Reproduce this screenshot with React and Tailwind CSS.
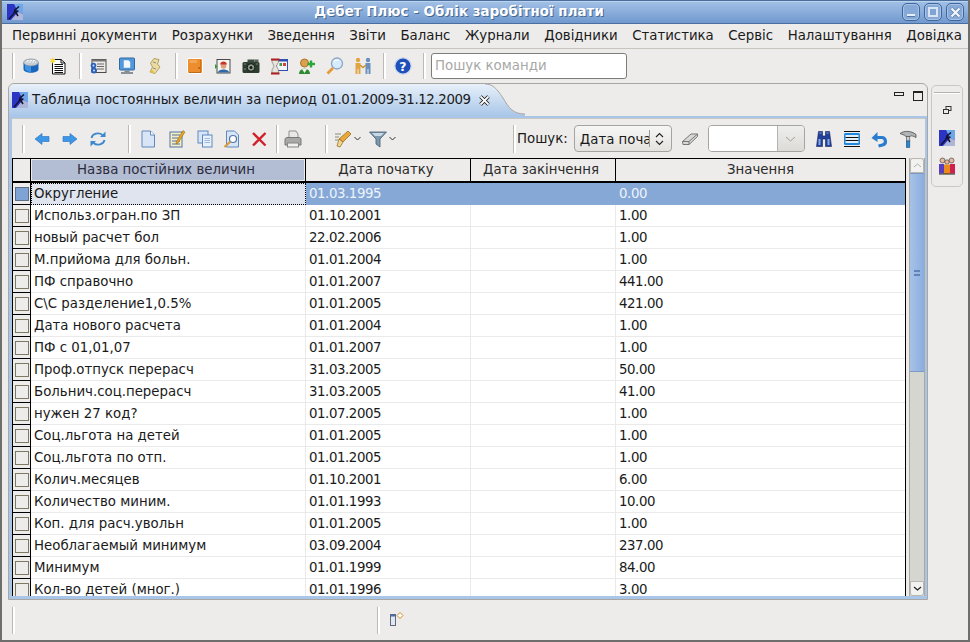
import React from 'react';

const MENU = ['Первинні документи', 'Розрахунки', 'Зведення', 'Звіти', 'Баланс', 'Журнали', 'Довідники', 'Статистика', 'Сервіс', 'Налаштування', 'Довідка'];

const ROWS = [
  ['Округление', '01.03.1995', '0.00'],
  ['Использ.огран.по ЗП', '01.10.2001', '1.00'],
  ['новый расчет бол', '22.02.2006', '1.00'],
  ['М.прийома для больн.', '01.01.2004', '1.00'],
  ['ПФ справочно', '01.01.2007', '441.00'],
  ['С\\С разделение1,0.5%', '01.01.2005', '421.00'],
  ['Дата нового расчета', '01.01.2004', '1.00'],
  ['ПФ с 01,01,07', '01.01.2007', '1.00'],
  ['Проф.отпуск перерасч', '31.03.2005', '50.00'],
  ['Больнич.соц.перерасч', '31.03.2005', '41.00'],
  ['нужен 27 код?', '01.07.2005', '1.00'],
  ['Соц.льгота на детей', '01.01.2005', '1.00'],
  ['Соц.льгота по отп.', '01.01.2005', '1.00'],
  ['Колич.месяцев', '01.10.2001', '6.00'],
  ['Количество миним.', '01.01.1993', '10.00'],
  ['Коп. для расч.увольн', '01.01.2005', '1.00'],
  ['Необлагаемый минимум', '03.09.2004', '237.00'],
  ['Минимум', '01.01.1999', '84.00'],
  ['Кол-во детей (мног.)', '01.01.1996', '3.00'],
];

const Svg = ({ children, s = 18 }) => (
  <svg width={s} height={s} viewBox="0 0 18 18" className="shrink-0">{children}</svg>
);

const AppLogo = () => (
  <svg width={16} height={16} viewBox="1 1 16 16" className="shrink-0">
    <rect x="1" y="1" width="16" height="16" fill="#2c34c4" />
    <path d="M8 1H17V11L12 9Z" fill="#6fa6e8" />
    <path d="M5 17L12 9L17 11V17Z" fill="#aeb6da" />
    <path d="M3 16L8 10.500L9 7L13 3.500M8 9L12.500 8M9 8L12 13" stroke="#12122e" strokeWidth="1.500" fill="none" />
  </svg>
);

const Sep = ({ h = 'h-[26px]' }) => (
  <div className={`w-[3px] ${h} shrink-0 border-l border-[#bdbab3] border-r-2 border-r-white`} />
);

const Db = () => (
  <Svg>
    <path d="M1.500 6V12C1.500 17 16.500 17 16.500 12V6Z" fill="#1766c0" />
    <path d="M3 8V12C4 14.500 8 15 9 15V8Z" fill="#3f92e0" />
    <ellipse cx="9" cy="5.500" rx="7.500" ry="3.500" fill="#c6ccd4" stroke="#6f7f90" strokeWidth=".6" />
    <path d="M4 5H14M5 3.500H13" stroke="#f2f4f6" strokeDasharray="2 1" />
  </Svg>
);
const NewNote = () => (
  <Svg>
    <path d="M3.500 2.500H12L16 6V17H3.500Z" fill="#fff" stroke="#111" />
    <path d="M12 2.500V6H16" fill="none" stroke="#111" />
    <path d="M5.500 7.500H14M5.500 9.500H14M5.500 11.500H14M5.500 13.500H14M5.500 15.500H14" stroke="#111" />
    <path d="M3.500 0L4.300 2.200 6.500 1.500 5.200 3.500 7 5 4.700 5 4 7 3 5 .5 5.500 2 3.500 .5 1.500 2.700 2.200Z" fill="#f4dc3a" />
  </Svg>
);
const ListGear = () => (
  <Svg>
    <rect x="3" y="2.500" width="14" height="13" fill="#ecebe8" stroke="#4a4a4a" />
    <rect x="3" y="2.500" width="14" height="2" fill="#777" />
    <path d="M8 7H15M8 9.500H15M8 12H15" stroke="#666" />
    <circle cx="4.500" cy="8.500" r="2.800" fill="#2a62b8" />
    <circle cx="5" cy="13.500" r="3" fill="#2a62b8" />
    <circle cx="5" cy="13.500" r="1" fill="#cfe0f6" />
    <circle cx="4.500" cy="8.500" r="1" fill="#cfe0f6" />
  </Svg>
);
const Monitor = () => (
  <Svg>
    <rect x="1.500" y="1" width="15" height="12" rx="1" fill="#4d9ae0" stroke="#35689c" />
    <path d="M5.500 3H10.500L12.500 5V11H5.500Z" fill="#f2f7fc" stroke="#5c8ab8" strokeWidth=".5" />
    <path d="M6.500 13.500H11.500V15H6.500Z" fill="#7d8a96" />
    <path d="M3 15.500H15V16.500H3Z" fill="#2c3640" />
  </Svg>
);
const Scroll = () => (
  <Svg>
    <path d="M9 1.500L14 2.500L12.500 7L15 10L10 16.500L5 15L7.500 10L5.500 6Z" fill="#ecdca0" stroke="#a58f48" strokeWidth=".8" />
    <path d="M8 5L11 6M8 11L11 12" stroke="#8e8e8e" />
    <path d="M5 14.500L7.500 16.500L9 15L7 13Z" fill="#e2c030" />
  </Svg>
);
const OrangeBook = () => (
  <svg width={16} height={16} viewBox="0 0 16 16" className="shrink-0">
    <rect x=".5" y=".5" width="15" height="15" rx="1.500" fill="#ec8d2e" stroke="#fff" />
    <path d="M2 14.500H14" stroke="#b96a1a" />
    <path d="M13.500 2V14" stroke="#c9741f" />
    <rect x="11" y="9" width="2" height="2" fill="#b96a1a" />
    <path d="M2.500 2H10V5H2.500Z" fill="#f3a655" />
  </svg>
);
const Portrait = () => (
  <Svg>
    <rect x="3" y="2.500" width="13" height="13.500" fill="#f4f4f0" stroke="#4a4a4a" />
    <path d="M4 15.500C4 11.500 15 11.500 15 15.500Z" fill="#2f68a8" />
    <circle cx="9.500" cy="9" r="2.800" fill="#e0a080" />
    <path d="M6 7.500C6.500 3.500 12.500 3.500 13 7.500Z" fill="#c8342a" />
    <path d="M1 7L3.500 9.500L1 12Z" fill="#2f9a3c" />
  </Svg>
);
const Camera = () => (
  <Svg>
    <rect x=".5" y="5" width="17" height="11" rx="1.500" fill="#2e3c30" />
    <rect x="5.500" y="2.500" width="7" height="3" fill="#3d4c3f" />
    <rect x="12.500" y="2.500" width="4" height="2.500" fill="#566357" />
    <circle cx="9" cy="10.500" r="3.800" fill="#8d9a8e" stroke="#151c16" />
    <circle cx="9" cy="10.500" r="1.500" fill="#151c16" />
    <path d="M2 7H4M14 7H16M2 12H4" stroke="#7e8c80" />
  </Svg>
);
const Hourglass = () => (
  <Svg>
    <rect x="6.500" y="2.500" width="11" height="11" fill="#f4f4f8" stroke="#2f4fb0" />
    <rect x="6.500" y="2.500" width="11" height="2" fill="#2f4fb0" />
    <rect x="13" y="6" width="3" height="3" fill="#d84030" />
    <rect x="9.500" y="6" width="2.500" height="3" fill="#3a9a4a" />
    <path d="M2 3H8.500V5L6.500 9L8.500 13V16H2V13L4 9L2 5Z" fill="#e8e4dc" stroke="#555" strokeWidth=".5" />
    <path d="M1 2.500H9.500M1 16.500H9.500" stroke="#b01f1f" strokeWidth="2" />
  </Svg>
);
const UserPlus = () => (
  <Svg>
    <circle cx="6.500" cy="6" r="4" fill="#dda050" stroke="#a8741e" />
    <path d="M1 17C1 10 12 10 12 17Z" fill="#2f8a34" />
    <path d="M4 12H9L6.500 16Z" fill="#f2f2e0" />
    <path d="M13 3.500V10.500M9.500 7H17" stroke="#28a838" strokeWidth="2.400" />
  </Svg>
);
const Magnifier = () => (
  <Svg>
    <circle cx="11" cy="6.500" r="5.500" fill="#d5ebff" stroke="#8aa6c4" strokeWidth="1.300" />
    <path d="M8 5C9 3.500 11 3 12.500 3.500" stroke="#fff" strokeWidth="1.200" fill="none" />
    <path d="M7 11L1.500 16.500" stroke="#e69a38" strokeWidth="2.800" />
  </Svg>
);
const Handshake = () => (
  <Svg>
    <circle cx="4" cy="3" r="2.200" fill="#e2a544" />
    <circle cx="14" cy="3" r="2.200" fill="#6a90c0" />
    <path d="M1.500 6H6.500V17H4.500V12H3.500V17H1.500Z" fill="#e2a544" />
    <path d="M11.500 6H16.500V17H14.500V12H13.500V17H11.500Z" fill="#6a90c0" />
    <path d="M6 8L9 10.500L12 8" stroke="#cf8f2c" strokeWidth="1.500" fill="none" />
  </Svg>
);
const Help = () => (
  <Svg>
    <circle cx="9" cy="9" r="8.200" fill="#1f4fb8" stroke="#cdd9ee" strokeWidth="1.200" />
    <text x="9" y="13.500" textAnchor="middle" fontSize="12.500" fontWeight="700" fill="#fff" fontFamily="'DejaVu Sans', sans-serif">?</text>
  </Svg>
);

const ArrowL = () => (
  <Svg>
    <path d="M2 9L9 3.500V6.500H16V11.500H9V14.500Z" fill="#3d97e8" stroke="#2a6fb8" strokeWidth=".6" />
  </Svg>
);
const ArrowR = () => (
  <Svg>
    <path d="M16 9L9 3.500V6.500H2V11.500H9V14.500Z" fill="#3d97e8" stroke="#2a6fb8" strokeWidth=".6" />
  </Svg>
);
const Refresh = () => (
  <Svg>
    <path d="M2.500 8A6.500 5.500 0 0 1 13.500 5M15.500 10A6.500 5.500 0 0 1 4.500 13" stroke="#3d88cc" strokeWidth="1.800" fill="none" />
    <path d="M11 7H16.500V1.500ZM7 11H1.500V16.500Z" fill="#3d88cc" />
  </Svg>
);
const Doc = () => (
  <Svg>
    <path d="M3 1H11.500L15.500 5V17H3Z" fill="#d7e5f7" stroke="#5f88bd" />
    <path d="M11.500 1V5H15.500" fill="#fff" stroke="#5f88bd" />
  </Svg>
);
const DocEdit = () => (
  <Svg>
    <rect x="2" y="2" width="12" height="15" fill="#f6edc0" stroke="#4f73a8" />
    <path d="M4 5H12M4 8H12M4 11H12M4 14H12" stroke="#4f73a8" />
    <path d="M15 0.500L17 2L10 13L8 14L8.300 11.700Z" fill="#e8a420" stroke="#8a6010" strokeWidth=".5" />
  </Svg>
);
const DocCopy = () => (
  <Svg>
    <rect x="2" y="1" width="10" height="12" fill="#d7e5f7" stroke="#5f88bd" />
    <rect x="6.500" y="5" width="9.500" height="12" fill="#e9f1fb" stroke="#5f88bd" />
    <path d="M8.500 8.500H14M8.500 10.500H14M8.500 12.500H14" stroke="#9cb8da" />
  </Svg>
);
const DocFind = () => (
  <Svg>
    <path d="M3.500 1H11.500L15.500 5V17H3.500Z" fill="#d7e5f7" stroke="#5f88bd" />
    <circle cx="10" cy="9" r="3.500" fill="#fff" stroke="#4f73a8" strokeWidth="1.200" />
    <path d="M7.500 11.500L1.500 17" stroke="#d89a38" strokeWidth="2.200" />
  </Svg>
);
const Cross = () => (
  <Svg>
    <path d="M3 3L15.500 15.500M15.500 3L3 15.500" stroke="#d0202c" strokeWidth="2.400" />
  </Svg>
);
const Printer = () => (
  <Svg>
    <path d="M5 1H12L14 4V9H5Z" fill="#e8e8e6" stroke="#8f8f8d" />
    <path d="M1 10C1 8 2 7.500 3 7.500H15C16 7.500 17 8 17 10V15H1Z" fill="#a8a8a6" stroke="#777775" />
    <rect x="3.500" y="13" width="11" height="4" fill="#efefed" stroke="#858583" />
  </Svg>
);
const Marker = () => (
  <Svg>
    <path d="M1 4H7M1 7H5M1 10H4" stroke="#8a8a7a" />
    <path d="M14 1L17 4L9 12L5 9Z" fill="#e8a83a" stroke="#8c6418" strokeWidth=".7" />
    <path d="M5 9L9 12L6 17L3 16Z" fill="#f0d890" stroke="#8c6418" strokeWidth=".7" />
  </Svg>
);
const Funnel = () => (
  <Svg>
    <path d="M.5 2H17.500L11 9V17L7 14V9Z" fill="#7b98ae" stroke="#3f5c74" strokeWidth=".8" />
    <path d="M3 3H15L12 6H6Z" fill="#c8d8e4" />
  </Svg>
);
const Chevron = () => (
  <svg width={7} height={5} viewBox="0 0 7 5" className="shrink-0">
    <path d="M.5 1L3.500 4L6.500 1" stroke="#333" fill="none" />
  </svg>
);
const Eraser = () => (
  <Svg>
    <path d="M1.500 11.500L10 4H16.500V6.500L8 14.500H2Z" fill="#d8d8d4" stroke="#777" />
    <path d="M1.500 11.500H8V14.500M8 11.500L16.500 4" stroke="#777" fill="none" />
  </Svg>
);
const Binoculars = () => (
  <Svg>
    <path d="M3.500 1.500H7.500V6H10.500V1.500H14.500L16.500 16.500H10.500V9H7.500V16.500H1.500Z" fill="#23409a" stroke="#14245c" strokeWidth=".6" />
    <path d="M3.500 9H5.500V15H3.500ZM12.500 9H14.500V15H12.500Z" fill="#86a8e6" />
    <path d="M4.500 3H6.500M11.500 3H13.500" stroke="#86a8e6" />
  </Svg>
);
const Lines = () => (
  <Svg>
    <path d="M1 1.500H17M1 16.500H17" stroke="#111" />
    <rect x="1" y="3" width="16" height="12" rx="1.500" fill="#1f86de" />
    <rect x="2.500" y="5" width="13" height="8" fill="#e2eef9" />
    <path d="M2.500 7.500H15.500M2.500 10.500H15.500" stroke="#111" />
  </Svg>
);
const Undo = () => (
  <Svg>
    <path d="M3.500 7.500H10.500A3.800 3.800 0 0 1 11.500 15L7.500 16" stroke="#2a7cd0" strokeWidth="3.200" fill="none" />
    <path d="M.5 8L6.500 2V12Z" fill="#2a7cd0" />
  </Svg>
);
const Hammer = () => (
  <Svg>
    <path d="M1 3.500C5 .5 12 .5 17 4.500V7.500C13 5.500 11.500 5.500 11 6.500H7C5 4.500 3 4.500 1 3.500Z" fill="#b0b4b6" stroke="#4e4e4e" strokeWidth=".8" />
    <rect x="7.300" y="6.500" width="3.500" height="4.500" fill="#c8ccce" stroke="#4e4e4e" strokeWidth=".6" />
    <rect x="7.300" y="11" width="3.500" height="6.500" fill="#2b85c8" stroke="#1b5788" strokeWidth=".6" />
  </Svg>
);
const People = () => (
  <Svg>
    <circle cx="4.500" cy="3.500" r="2.500" fill="#e8b8a0" stroke="#333" strokeWidth=".6" />
    <circle cx="13.500" cy="3.500" r="2.500" fill="#e8b8a0" stroke="#333" strokeWidth=".6" />
    <circle cx="9" cy="5" r="2.200" fill="#e8b8a0" stroke="#333" strokeWidth=".6" />
    <path d="M1 7H6V16.500H1Z" fill="#5a3cc0" />
    <path d="M12 7H17V16.500H12Z" fill="#d02050" />
    <path d="M6 7.500H12V17H6Z" fill="#ea8a1e" />
    <path d="M1 17H17" stroke="#222" />
  </Svg>
);

const WinBtn = ({ children }) => (
  <div className="w-[18px] h-[18px] rounded-[5px] border border-[#3f669c] bg-[#86a9d7] shadow-[inset_0_0_0_1px_#a9c4e6] flex items-center justify-center">
    {children}
  </div>
);

const Slot = ({ w = 'w-[28px]', children }) => (
  <div className={`${w} flex items-center justify-center shrink-0`}>{children}</div>
);

export default function App() {
  return (
    <div className="w-[970px] h-[642px] overflow-hidden flex flex-col bg-[#edecea] text-[13.33px] text-[#1a1a1a] border-x-2 border-b-2 border-[#6e6e6c] font-['DejaVu_Sans',sans-serif]">
      {/* title bar */}
      <div className="h-[24px] shrink-0 flex items-center pl-[7px] pr-[6px] -mx-[2px] bg-gradient-to-b from-[#a3c1e6] to-[#7199cf] border-y border-[#4a6f9f] shadow-[inset_0_1px_0_#bcd3ee]">
        <AppLogo />
        <div className="flex-1 text-center font-bold text-white text-[13.33px] tracking-[0.09px] [text-shadow:1px_1px_0_#47698f] pr-[7px]">
          Дебет Плюс - Облік заробітної плати
        </div>
        <div className="flex gap-[4px]">
          <WinBtn><div className="w-[8px] h-[3px] mt-[7px] bg-[#e6eef8] border-b border-[#5577a8]" /></WinBtn>
          <WinBtn><div className="w-[10px] h-[10px] border-2 border-[#d8e4f4] bg-[#7fa3d2]" /></WinBtn>
          <WinBtn>
            <svg width="11" height="11" viewBox="0 0 11 11">
              <path d="M1.500 1.500L9.500 9.500M9.500 1.500L1.500 9.500" stroke="#5577a8" strokeWidth="3.600" />
              <path d="M1.500 1.500L9.500 9.500M9.500 1.500L1.500 9.500" stroke="#f2f6fb" strokeWidth="2.400" />
            </svg>
          </WinBtn>
        </div>
      </div>

      {/* menu */}
      <div className="h-[25px] shrink-0 flex items-center gap-[14.5px] pl-[10px] border-b border-[#c8c5be]">
        {MENU.map((m) => (
          <span key={m} className="whitespace-nowrap">{m}</span>
        ))}
      </div>

      {/* main toolbar */}
      <div className="h-[34px] shrink-0 flex items-center pl-[10px]">
        <Sep />
        <Slot w="w-[32px]"><Db /></Slot>
        <Slot w="w-[22px]"><NewNote /></Slot>
        <div className="w-[10px]" />
        <Sep />
        <Slot w="w-[32px]"><ListGear /></Slot>
        <Slot w="w-[25px]"><Monitor /></Slot>
        <Slot w="w-[30px]"><Scroll /></Slot>
        <div className="w-[6px]" />
        <Sep />
        <Slot w="w-[34px]"><OrangeBook /></Slot>
        <Slot w="w-[21px]"><Portrait /></Slot>
        <Slot w="w-[35px]"><Camera /></Slot>
        <Slot w="w-[22px]"><Hourglass /></Slot>
        <Slot w="w-[34px]"><UserPlus /></Slot>
        <Slot w="w-[22px]"><Magnifier /></Slot>
        <Slot w="w-[34px]"><Handshake /></Slot>
        <div className="w-[3px]" />
        <Sep />
        <Slot w="w-[34px]"><Help /></Slot>
        <div className="w-[3px]" />
        <Sep />
        <div className="ml-[5px] w-[196px] h-[26px] bg-white border border-[#7d7d7b] rounded-[3px] flex items-center pl-[3px] text-[#a8a8a6]">
          Пошук команди
        </div>
      </div>

      {/* workbench */}
      <div className="flex-1 min-h-0 flex pl-[6px] pb-[1px] pr-[5px]">
        <div className="w-[920px] shrink-0 flex flex-col border-x border-b border-t border-[#a8a7a3] rounded-t-[6px] min-h-0">
          {/* tab row */}
          <div className="h-[32px] shrink-0 flex">
            <div className="w-[476px] shrink-0 flex items-center pl-[3px] bg-gradient-to-b from-[#e8f0fa] to-[#a9c6e8] rounded-tl-[6px]">
              <AppLogo />
              <span className="ml-[4px] whitespace-nowrap">
                Таблица постоянных величин за период <span className="tracking-[-0.38px]">01.01.2009-31.12.2009</span>
              </span>
              <svg width="11" height="11" viewBox="0 0 11 11" className="ml-[8px] shrink-0 relative z-10">
                <path d="M1.500 1.500L9.500 9.500M9.500 1.500L1.500 9.500" stroke="#111" strokeWidth="3.400" />
                <path d="M1.500 1.500L9.500 9.500M9.500 1.500L1.500 9.500" stroke="#fff" strokeWidth="1.800" />
              </svg>
            </div>
            <svg width="40" height="32" viewBox="0 0 40 32" className="shrink-0">
              <defs>
                <linearGradient id="tabTail" x1="0" y1="0" x2="0" y2="1">
                  <stop offset="0" stopColor="#e8f0fa" />
                  <stop offset="1" stopColor="#a9c6e8" />
                </linearGradient>
              </defs>
              <path d="M0 0C8 0 12 5 18 14C24 24 28 30 40 30V32H0Z" fill="url(#tabTail)" />
              <path d="M0 0C8 0 12 5 18 14C24 24 28 30 40 30" fill="none" stroke="#a8a7a3" />
            </svg>
            <div className="flex-1 flex items-start justify-end pt-[7px] pr-[4px] gap-[9px]">
              <div className="w-[10px] h-[4px] mt-[1px] border border-[#222]" />
              <div className="w-[10px] h-[10px] border border-[#222] border-t-2" />
            </div>
          </div>

          {/* view */}
          <div className="flex-1 min-h-0 flex flex-col border-l-[3px] border-r-2 border-b-[3px] border-t-2 border-[#a9c6e8]">
            <div className="h-[40px] shrink-0 flex items-center pl-[10px] border-t border-[#c8c7c3]">
              <Sep h="h-[28px]" />
              <Slot w="w-[33px]"><ArrowL /></Slot>
              <Slot w="w-[24px]"><ArrowR /></Slot>
              <Slot w="w-[32px]"><Refresh /></Slot>
              <div className="w-[14px]" />
              <Sep h="h-[28px]" />
              <Slot w="w-[34px]"><Doc /></Slot>
              <Slot w="w-[23px]"><DocEdit /></Slot>
              <Slot w="w-[34px]"><DocCopy /></Slot>
              <Slot w="w-[19px]"><DocFind /></Slot>
              <Slot w="w-[35px]"><Cross /></Slot>
              <Sep h="h-[28px]" />
              <Slot w="w-[28px]"><Printer /></Slot>
              <div className="w-[18px]" />
              <Sep h="h-[28px]" />
              <Slot w="w-[30px]"><Marker /></Slot>
              <div className="-ml-[4px]"><Chevron /></div>
              <div className="ml-[3px]"><Slot w="w-[28px]"><Funnel /></Slot></div>
              <div className="-ml-[3px]"><Chevron /></div>
              <div className="w-[117px]" />
              <Sep h="h-[28px]" />
              <span className="ml-[1px] whitespace-nowrap">Пошук:</span>
              <div className="ml-[6px] w-[98px] h-[27px] rounded-[4px] border border-[#a5a4a0] bg-gradient-to-b from-[#f6f6f4] to-[#e4e3e0] flex items-center pl-[5px] overflow-hidden">
                <span className="w-[70px] h-[17px] shrink-0 overflow-hidden border-r border-[#9a9a98]">
                  <span className="block whitespace-nowrap w-[69px] overflow-hidden">Дата початку</span>
                </span>
                <svg width="9" height="14" viewBox="0 0 9 14" className="ml-[5px] shrink-0"><path d="M1 5L4.500 1.500L8 5M1 9L4.500 12.500L8 9" stroke="#222" fill="none" strokeWidth="1.100" /></svg>
              </div>
              <Slot w="w-[36px]"><Eraser /></Slot>
              <div className="w-[97px] h-[27px] rounded-[4px] border border-[#a5a4a0] flex overflow-hidden">
                <div className="flex-1 bg-white" />
                <div className="w-[27px] bg-gradient-to-b from-[#eeeeec] to-[#dcdbd8] border-l border-[#b5b4b0] flex items-center justify-center">
                  <svg width="11" height="6" viewBox="0 0 11 6"><path d="M1 1L5.500 5L10 1" stroke="#a0a09e" fill="none" /></svg>
                </div>
              </div>
              <div className="w-[5px]" />
              <Slot><Binoculars /></Slot>
              <Slot><Lines /></Slot>
              <Slot><Undo /></Slot>
              <Slot><Hammer /></Slot>
            </div>

            {/* table */}
            <div className="flex-1 min-h-0 flex">
              <div className="w-[894px] shrink-0 flex flex-col overflow-hidden border-l border-t border-r border-black">
                <div className="h-[24px] shrink-0 flex bg-[#edecea] border-b-2 border-black">
                  <div className="w-[18px] shrink-0 border-r border-black" />
                  <div className="w-[275px] shrink-0 p-[1px] border-r border-black">
                    <div className="h-full bg-[#b3bdd3] flex items-center justify-center pr-[4px] text-[#2b2b3a]">Назва постійних величин</div>
                  </div>
                  <div className="w-[165px] shrink-0 border-r border-black flex items-center justify-center pr-[4px] text-[#2b2b2b]">Дата початку</div>
                  <div className="w-[145px] shrink-0 border-r border-black flex items-center justify-center pr-[4px] text-[#2b2b2b]">Дата закінчення</div>
                  <div className="flex-1 flex items-center justify-center text-[#2b2b2b]">Значення</div>
                </div>
                {ROWS.map((r, i) => {
                  const sel = i === 0;
                  return (
                    <div key={r[0]} className="h-[22px] shrink-0 flex">
                      <div className="w-[18px] shrink-0 bg-[#edecea] border-r border-b border-black flex items-center justify-center">
                        <div className={`w-[14px] h-[14px] border ${sel ? 'bg-[#7fa3d4] border-[#5c6f86]' : 'bg-[#edecea] border-[#7e7a62]'}`} />
                      </div>
                      <div className={`w-[275px] shrink-0 flex items-center pl-[3px] ${sel ? 'bg-[#dfe4ef] outline-1 -outline-offset-1 outline-dotted outline-black' : 'bg-white border-r border-b border-[#eaeaea]'}`}>
                        {r[0]}
                      </div>
                      <div className={`w-[165px] shrink-0 flex items-center pl-[3px] tracking-[-0.42px] ${sel ? 'bg-[#85a8d6] text-[#eef3fa]' : 'bg-white border-r border-b border-[#eaeaea]'}`}>{r[1]}</div>
                      <div className={`w-[145px] shrink-0 ${sel ? 'bg-[#85a8d6]' : 'bg-white border-r border-b border-[#eaeaea]'}`} />
                      <div className={`flex-1 flex items-center pl-[3px] tracking-[-0.42px] ${sel ? 'bg-[#85a8d6] text-[#eef3fa]' : 'bg-white border-b border-[#eaeaea]'}`}>{r[2]}</div>
                    </div>
                  );
                })}
              </div>
              {/* scrollbar */}
              <div className="ml-[3px] w-[16px] flex flex-col bg-[#d5d6cf] border-x border-[#a9a8a3]">
                <div className="h-[15px] shrink-0 bg-[#f2f2f0] border border-[#b8b7b2] rounded-t-[3px] flex items-center justify-center">
                  <svg width="9" height="5" viewBox="0 0 9 5"><path d="M1 4L4.500 1L8 4" stroke="#b0b0ae" fill="none" /></svg>
                </div>
                <div className="h-[199px] shrink-0 bg-gradient-to-r from-[#a6c2e6] to-[#8bade0] border-y border-[#7b99c4] flex items-center justify-center">
                  <div className="w-[6px] h-[6px] border-y-2 border-[#5f83b8] border-double" />
                </div>
                <div className="flex-1" />
                <div className="h-[15px] shrink-0 bg-[#f2f2f0] border border-[#b8b7b2] rounded-b-[3px] flex items-center justify-center">
                  <svg width="9" height="5" viewBox="0 0 9 5"><path d="M1 1L4.500 4L8 1" stroke="#222" fill="none" strokeWidth="1.200" /></svg>
                </div>
              </div>
            </div>
          </div>
        </div>

        {/* right trim */}
        <div className="ml-[3px] w-[32px] h-[102px] mt-[2px] border border-[#c8c7c3] rounded-[5px] flex flex-col items-center pt-[6px]">
          <div className="w-[26px] h-[2px] border-t border-[#b5b4b0] border-b border-b-white shrink-0" />
          <div className="h-[32px] flex items-center shrink-0">
            <svg width="9" height="9" viewBox="0 0 9 9"><rect x="3" y=".5" width="5" height="4" fill="none" stroke="#333" /><rect x=".5" y="3.500" width="5" height="4" fill="#edecea" stroke="#333" /></svg>
          </div>
          <div className="mt-[4px]"><AppLogo /></div>
          <div className="mt-[11px]"><People /></div>
        </div>
      </div>

      {/* status bar */}
      <div className="h-[39px] shrink-0 flex items-center pl-[10px]">
        <Sep h="h-[27px]" />
        <div className="w-[362px]" />
        <Sep h="h-[27px]" />
        <svg width="14" height="14" viewBox="0 0 14 14" className="ml-[10px] mb-[3px]">
          <rect x=".5" y="2.500" width="5" height="11" fill="#dde9f2" stroke="#667" />
          <rect x=".5" y="2.500" width="5" height="2" fill="#4a6fa8" />
          <path d="M10 .5L13 3.500L10 6.500L7 3.500Z" fill="#fff" stroke="#d08a20" />
        </svg>
      </div>
    </div>
  );
}
